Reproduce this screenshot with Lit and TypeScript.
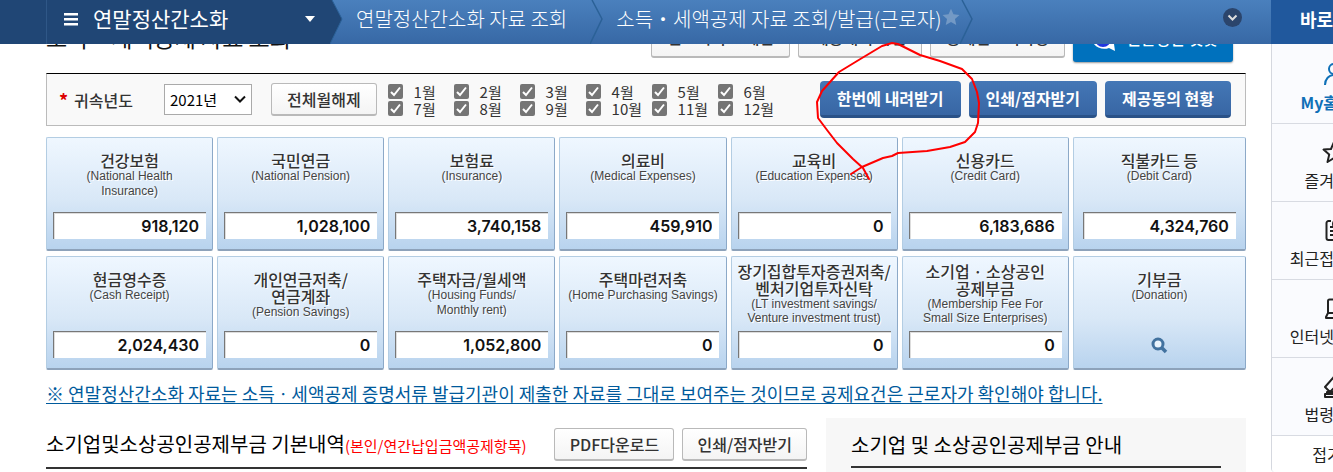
import { LitElement, html, css, svg, nothing } from "lit";
import { customElement } from "lit/decorators.js";
import { classMap } from "lit/directives/class-map.js";

interface Category {
  title: string[];
  english: string[];
  amount?: string;
  tall?: boolean;
}

const CATEGORIES: Category[] = [
  { title: ["건강보험"], english: ["(National Health", "Insurance)"], amount: "918,120" },
  { title: ["국민연금"], english: ["(National Pension)"], amount: "1,028,100" },
  { title: ["보험료"], english: ["(Insurance)"], amount: "3,740,158" },
  { title: ["의료비"], english: ["(Medical Expenses)"], amount: "459,910" },
  { title: ["교육비"], english: ["(Education Expenses)"], amount: "0" },
  { title: ["신용카드"], english: ["(Credit Card)"], amount: "6,183,686" },
  { title: ["직불카드 등"], english: ["(Debit Card)"], amount: "4,324,760" },
  { title: ["현금영수증"], english: ["(Cash Receipt)"], amount: "2,024,430" },
  { title: ["개인연금저축/", "연금계좌"], english: ["(Pension Savings)"], amount: "0" },
  { title: ["주택자금/월세액"], english: ["(Housing Funds/", "Monthly rent)"], amount: "1,052,800" },
  { title: ["주택마련저축"], english: ["(Home Purchasing Savings)"], amount: "0" },
  {
    title: ["장기집합투자증권저축/", "벤처기업투자신탁"],
    english: ["(LT investment savings/", "Venture investment trust)"],
    amount: "0",
    tall: true,
  },
  {
    title: ["소기업 · 소상공인", "공제부금"],
    english: ["(Membership Fee For", "Small Size Enterprises)"],
    amount: "0",
    tall: true,
  },
  { title: ["기부금"], english: ["(Donation)"] },
];

const MONTHS = Array.from({ length: 12 }, (_, i) => i + 1);

const QUICK = [
  {
    label: "My홈택스",
    active: true,
    icon: svg`<circle cx="12" cy="7" r="5"/><path d="M3 23c0-6 4-10 9-10s9 4 9 10"/>`,
  },
  {
    label: "즐겨찾기",
    icon: svg`<path d="M12 2l3 7 7.500.6-5.700 5 1.700 7.400L12 18l-6.500 4 1.700-7.400-5.700-5L9 9z"/>`,
  },
  {
    label: "최근접속메뉴",
    icon: svg`<path d="M9 3H6.500a2 2 0 0 0-2 2v15a2 2 0 0 0 2 2H19a2 2 0 0 0 2-2v-5M8 9h3M8 13h5M8 17h8"/><circle cx="16" cy="6" r="5"/><path d="M16 3v3h3"/>`,
  },
  {
    label: "인터넷상담실",
    icon: svg`<path d="M6 17V5a1.500 1.500 0 0 1 1.500-1.500h9A1.500 1.500 0 0 1 18 5v12M6 17l-2 4v1h17v-1l-3-4z"/>`,
  },
  {
    label: "법령정보",
    icon: svg`<path d="M3 23v-3h12v3zM5 20v-2h8v2M3 13l8-9 6 5-9 9zM11 4l2-3 7 7-3 1M13 12l8 8"/>`,
  },
];

@customElement("category-card")
class CategoryCard extends LitElement {
  static properties = { item: { attribute: false } };
  declare item: Category;

  static styles = css`
    :host {
      display: block;
      min-width: 0;
    }
    .card {
      box-sizing: border-box;
      display: flex;
      flex-direction: column;
      align-items: center;
      height: 114px;
      padding: 14px 6px 10px;
      border: 1px solid #8ca9c8;
      border-top-color: #b3cde3;
      border-left-color: #b3cde3;
      border-bottom: 2px solid #8da2ba;
      border-radius: 2px;
      background: linear-gradient(#eff7ff, #d9e8f7 55%, #b8d3ee);
      color: #333;
      text-align: center;
      white-space: nowrap;
      text-shadow: 1px 1px 0 #fff;
    }
    .tall {
      padding-top: 6px;
    }
    .title {
      font-size: 16px;
      line-height: 17px;
      font-weight: 500;
    }
    .english {
      font-family: "Liberation Sans", Arial, sans-serif;
      font-size: 12px;
      line-height: 15px;
      color: #444;
    }
    .tall .english {
      line-height: 14px;
    }
    .line {
      display: block;
    }
    .amount {
      box-sizing: border-box;
      width: 100%;
      max-width: 153px;
      height: 27px;
      margin: auto 0 0;
      padding: 0 7px;
      border: 0 solid #777;
      border-width: 1px 0 0 1px;
      border-radius: 0;
      background: #fff;
      box-shadow: inset 1px 1px 0 #ddd;
      font: 600 16px Inter, "Noto Sans CJK KR", sans-serif;
      color: #111;
      text-align: right;
      outline: none;
    }
    .search {
      margin: auto 0 4px;
      padding: 0;
      border: 0;
      background: none;
      line-height: 0;
    }
  `;

  render() {
    const { title, english, amount, tall } = this.item;
    return html`<div class=${classMap({ card: true, tall: !!tall })}>
      <label class="title" for="amount">${title.map((t) => html`<span class="line">${t}</span>`)}</label>
      <div class="english">${english.map((t) => html`<span class="line">${t}</span>`)}</div>
      ${amount !== undefined
        ? html`<input class="amount" id="amount" type="text" readonly .value=${amount} />`
        : html`<button class="search" id="amount" type="button" aria-label="조회">
            <svg width="18" height="18" viewBox="0 0 18 18" fill="none" stroke="#42729f">
              <circle cx="8" cy="8" r="5" stroke-width="3" fill="#e9f3fc" />
              <path d="M12 12l4 4" stroke-width="3.500" />
            </svg>
          </button>`}
    </div>`;
  }
}

@customElement("app-root")
class AppRoot extends LitElement {
  static styles = css`
    :host {
      display: block;
      position: relative;
      height: 100vh;
      overflow: hidden;
      background: #fff;
      color: #333;
      font-family: "Noto Sans CJK KR", "Noto Sans", sans-serif;
      white-space: nowrap;
    }
    * {
      box-sizing: border-box;
    }
    h1,
    h2,
    p {
      margin: 0;
      font-weight: 400;
    }
    button,
    select {
      font-family: inherit;
      margin: 0;
    }
    a {
      color: inherit;
      text-decoration: none;
    }
    .topbar {
      position: absolute;
      z-index: 2;
      top: 0;
      left: 0;
      right: 0;
      display: flex;
      height: 44px;
      background: linear-gradient(#4a80bd, #3768a5);
      color: #fff;
      font-size: 20px;
      line-height: 38px;
    }
    .menu {
      display: flex;
      align-items: flex-start;
      width: 330px;
      padding-left: 46px;
      background: #204675;
    }
    .menu-btn {
      display: flex;
      align-items: center;
      flex: 1;
      height: 44px;
      padding: 0 15px 6px 17px;
      border: 0;
      border-left: 1px solid #2f5787;
      background: none;
      color: #fff;
      font-size: 21px;
      line-height: 34px;
    }
    .menu-label {
      flex: 1;
      padding: 0 0 2px 15px;
      text-align: left;
    }
    .crumb {
      display: flex;
      font-weight: 300;
    }
    .crumb-first {
      padding: 0 23px 0 12px;
    }
    .crumb-last {
      padding-left: 12px;
    }
    .edge {
      flex: none;
      display: block;
    }
    .favorite {
      height: 38px;
      padding: 0;
      border: 0;
      background: none;
    }
    .more {
      height: 39px;
      margin-left: auto;
      padding: 0 29px;
      border: 0;
      background: none;
    }
    .quick-title {
      flex: none;
      width: 62px;
      background: #20589d;
      overflow: hidden;
      font-size: 18px;
      font-weight: 700;
    }
    .quick-inner {
      display: block;
      width: 124px;
      text-align: center;
    }
    .layout {
      display: flex;
      align-items: flex-start;
    }
    .content {
      position: relative;
      flex: 1;
      min-width: 0;
      padding: 22px 25px 0 46px;
    }
    .heading {
      display: flex;
      align-items: flex-start;
      gap: 8px;
      height: 51px;
      padding-right: 13px;
    }
    .page-title {
      flex: 1;
      font-size: 23px;
      line-height: 30px;
      color: #111;
    }
    .btn {
      height: 33px;
      padding: 0 15px;
      border: 1px solid #b9b9b9;
      border-bottom: 2px solid #b9b9b9;
      border-radius: 3px;
      background: linear-gradient(#fff, #f4f4f4);
      color: #333;
      font-size: 16px;
      font-weight: 500;
      line-height: 28px;
    }
    .heading .btn {
      height: 36px;
      padding-bottom: 8px;
    }
    .heading .chatbot {
      display: flex;
      align-items: center;
      gap: 8px;
      height: 40px;
      border: 0;
      background: #0071bd;
      color: #fff;
      box-shadow: 0 1px 2px #999;
    }
    .filter {
      display: flex;
      align-items: center;
      height: 53px;
      padding: 0 14px 0 10px;
      border: 1px solid #bbb;
      border-top-color: #000;
      background: #f9f9f9;
    }
    .required {
      width: 17px;
      padding-left: 2px;
      color: #d00;
      font-size: 18px;
      font-weight: 700;
    }
    .year-label {
      width: 90px;
      font-size: 16px;
      font-weight: 500;
    }
    .year {
      position: relative;
      display: flex;
      width: 88px;
      margin-right: 19px;
    }
    .year-select {
      appearance: none;
      width: 100%;
      height: 31px;
      padding: 0 5px;
      border: 1px solid #aaa;
      border-radius: 0;
      background: #fff;
      color: #000;
      font-size: 15px;
    }
    .year-arrow {
      position: absolute;
      right: 6px;
      top: 11px;
      pointer-events: none;
    }
    .months {
      display: grid;
      grid-template-columns: repeat(6, 66px);
      row-gap: 2px;
      margin-left: 11px;
      flex: 1;
    }
    .month {
      display: flex;
      align-items: center;
      height: 15px;
      font-size: 15px;
      line-height: 15px;
    }
    .check {
      flex: none;
      appearance: none;
      width: 15px;
      height: 15px;
      margin: 0;
      border-radius: 2px;
      background: #757575;
    }
    .month-box {
      position: relative;
      display: flex;
      margin-right: 11px;
    }
    .tick {
      position: absolute;
      inset: 0;
      pointer-events: none;
      visibility: hidden;
    }
    .check:checked + .tick {
      visibility: visible;
    }
    .actions {
      display: flex;
      gap: 8px;
    }
    .primary {
      height: 37px;
      padding: 0 17px;
      border: 0;
      border-bottom: 3px solid #2a5288;
      border-radius: 4px;
      background: linear-gradient(#4477b6, #3866a4);
      color: #fff;
      font-size: 16px;
      font-weight: 700;
    }
    .cards {
      display: grid;
      grid-template-columns: repeat(6, minmax(0, 167fr)) minmax(0, 173fr);
      gap: 5px 4px;
      margin-top: 11px;
    }
    .notice {
      margin-top: 11px;
      font-size: 18px;
      line-height: 24px;
      color: #005a9c;
    }
    .notice-link {
      text-decoration: underline;
      text-decoration-thickness: 1px;
      text-underline-offset: 2px;
    }
    .panels {
      display: grid;
      grid-template-columns: minmax(0, 761fr) minmax(0, 420fr);
      gap: 19px;
      margin-top: 13px;
    }
    .detail {
      display: flex;
      align-items: center;
      gap: 8px;
      height: 51px;
      padding-top: 4px;
      border-bottom: 2px solid #333;
    }
    .detail .btn {
      padding: 0 14px;
      min-width: 120px;
    }
    .panel-title {
      flex: 1;
      font-size: 20px;
      line-height: 30px;
      color: #000;
    }
    .sub {
      font-size: 15px;
      color: #f00;
    }
    .guide {
      height: 70px;
      padding: 0 25px;
      background: #f7f7f7;
    }
    .guide .panel-title {
      padding: 12px 0 6px;
      border-bottom: 2px solid #333;
    }
    .marker {
      position: absolute;
      top: 0;
      left: 0;
      z-index: 3;
      pointer-events: none;
    }
    .quick {
      flex: none;
      width: 62px;
      margin-top: 44px;
      padding-top: 2px;
      overflow: hidden;
      border-left: 1px solid #d5d8df;
      border-bottom-left-radius: 4px;
      background: #fafbfe;
      color: #222;
      font-size: 16px;
    }
    .quick-item {
      display: flex;
      flex-direction: column;
      align-items: center;
      width: 124px;
      height: 78px;
      padding-top: 16px;
      border-bottom: 1px solid #d8dbe2;
      line-height: 24px;
    }
    .quick-item svg {
      margin-bottom: 4px;
    }
    .active {
      color: #0f70b7;
      font-weight: 700;
    }
    .fold {
      display: flex;
      align-items: center;
      justify-content: center;
      gap: 6px;
      width: 124px;
      height: 36px;
      border: 0;
      background: #fff;
      color: #222;
      font-size: 16px;
    }
  `;

  render() {
    return html`
      <header class="topbar">
        <nav class="menu">
          <button class="menu-btn" type="button">
            <svg width="14" height="14" viewBox="0 0 14 14" fill="#fff">
              <path d="M0 1h14v2.500H0zM0 6h14v2.500H0zM0 11h14v2.500H0z" />
            </svg>
            <span class="menu-label">연말정산간소화</span>
            <svg width="10" height="6" viewBox="0 0 10 6" fill="#fff"><path d="M0 0h10L5 6z" /></svg>
          </button>
        </nav>
        <svg class="edge" width="14" height="44" viewBox="0 0 14 44">
          <path d="M0 0h2l10 19L0 44z" fill="#204675" />
          <path d="M2 0l10 19L0 44" fill="none" stroke="#2b6197" />
        </svg>
        <div class="crumb">
          <a class="crumb-first" href="#">연말정산간소화 자료 조회</a>
          ${this.chevron()}
          <a class="crumb-last" href="#">소득・세액공제 자료 조회/발급(근로자)</a>
          <button class="favorite" type="button" aria-label="즐겨찾기">
            <svg width="18" height="18" viewBox="0 0 24 24" fill="#7399c5">
              <path d="M12 1l3.300 7.300 8 .9-6 5.400 1.700 7.900-7-4-7 4 1.700-7.900-6-5.400 8-.9z" />
            </svg>
          </button>
          ${this.chevron()}
        </div>
        <button class="more" type="button" aria-label="펼치기">
          <svg width="19" height="19" viewBox="0 0 19 19">
            <circle cx="9.500" cy="9.500" r="9.500" fill="#2b456c" />
            <path d="M5.500 7.500l4 4 4-4" fill="none" stroke="#ddd" stroke-width="2" />
          </svg>
        </button>
        <div class="quick-title"><span class="quick-inner">바로가기</span></div>
      </header>

      <div class="layout">
        <main class="content">
          <div class="heading">
            <h1 class="page-title">소득・세액공제 자료 조회</h1>
            <button class="btn" type="button">간소화자료 제한</button>
            <button class="btn" type="button">제공내역 확인</button>
            <button class="btn" type="button">공제신고서작성</button>
            <button class="btn chatbot" type="button">
              <svg width="30" height="28" viewBox="0 0 30 28">
                <path d="M14 1a13 12 0 1 0 7 23l6 3-1-7A13 12 0 0 0 14 1z" fill="#fff" />
                <circle cx="15" cy="15" r="6" fill="none" stroke="#2036e0" stroke-width="4" />
              </svg>
              연말정산 챗봇
            </button>
          </div>

          <section class="filter">
            <span class="required">*</span>
            <label class="year-label" for="year">귀속년도</label>
            <span class="year">
              <select class="year-select" id="year">
                <option>2021년</option>
                <option>2020년</option>
              </select>
              <svg class="year-arrow" width="12" height="9" viewBox="0 0 12 9">
                <path d="M1 1.500l5 5 5-5" fill="none" stroke="#111" stroke-width="2" />
              </svg>
            </span>
            <button class="btn" type="button">전체월해제</button>
            <div class="months">
              ${MONTHS.map(
                (m) => html`<label class="month">
                  <span class="month-box">
                    <input class="check" type="checkbox" checked />
                    <svg class="tick" width="15" height="15" viewBox="0 0 15 15">
                      <path d="M3 8l3 3 6-7.500" fill="none" stroke="#fff" stroke-width="2" />
                    </svg>
                  </span>
                  ${m}월
                </label>`
              )}
            </div>
            <div class="actions">
              <button class="primary" type="button">한번에 내려받기</button>
              <button class="primary" type="button">인쇄/점자받기</button>
              <button class="primary" type="button">제공동의 현황</button>
            </div>
          </section>

          <section class="cards">
            ${CATEGORIES.map((c) => html`<category-card .item=${c}></category-card>`)}
          </section>

          <p class="notice">
            <a class="notice-link" href="#"
              >※ 연말정산간소화 자료는 소득ㆍ세액공제 증명서류 발급기관이 제출한 자료를 그대로 보여주는 것이므로 공제요건은 근로자가 확인해야 합니다.</a
            >
          </p>

          <div class="panels">
            <section class="detail">
              <h2 class="panel-title">
                소기업및소상공인공제부금 기본내역<span class="sub">(본인/연간납입금액공제항목)</span>
              </h2>
              <button class="btn" type="button">PDF다운로드</button>
              <button class="btn" type="button">인쇄/점자받기</button>
            </section>
            <section class="guide">
              <h2 class="panel-title">소기업 및 소상공인공제부금 안내</h2>
            </section>
          </div>
        </main>

        <aside class="quick">
          ${QUICK.map(
            (q) => html`<a class=${classMap({ "quick-item": true, active: !!q.active })} href="#">
              <svg
                width="24"
                height="24"
                viewBox="0 0 24 24"
                fill="none"
                stroke="currentColor"
                stroke-width="2"
                stroke-linejoin="round"
              >
                ${q.icon ?? nothing}
              </svg>
              ${q.label}
            </a>`
          )}
          <button class="fold" type="button">
            접기
            <svg width="8" height="12" viewBox="0 0 8 12" fill="none" stroke="#222" stroke-width="2">
              <path d="M1 1l5 5-5 5" />
            </svg>
          </button>
        </aside>
      </div>

      <svg class="marker" width="1000" height="190" viewBox="0 0 1000 190" fill="none">
        <path
          d="M851 174L862 167 883 158 892 156 898 153 927 151 950 147 965 142 975 132 978 123 979 103 977 92 972 79 962 69 940 61 920 55 898 44 892 43 882 46 862 58 839 72 822 91 817 102 818 118 827 130 837 143 853 159 863 168 869 179"
          stroke="#f00"
          stroke-width="2"
          stroke-linejoin="round"
          stroke-linecap="round"
        />
      </svg>
    `;
  }

  private chevron() {
    return html`<svg class="edge" width="14" height="44" viewBox="0 0 14 44">
      <path d="M2 0l10 19L0 44" fill="none" stroke="#2b6197" stroke-width="1.500" />
    </svg>`;
  }
}
